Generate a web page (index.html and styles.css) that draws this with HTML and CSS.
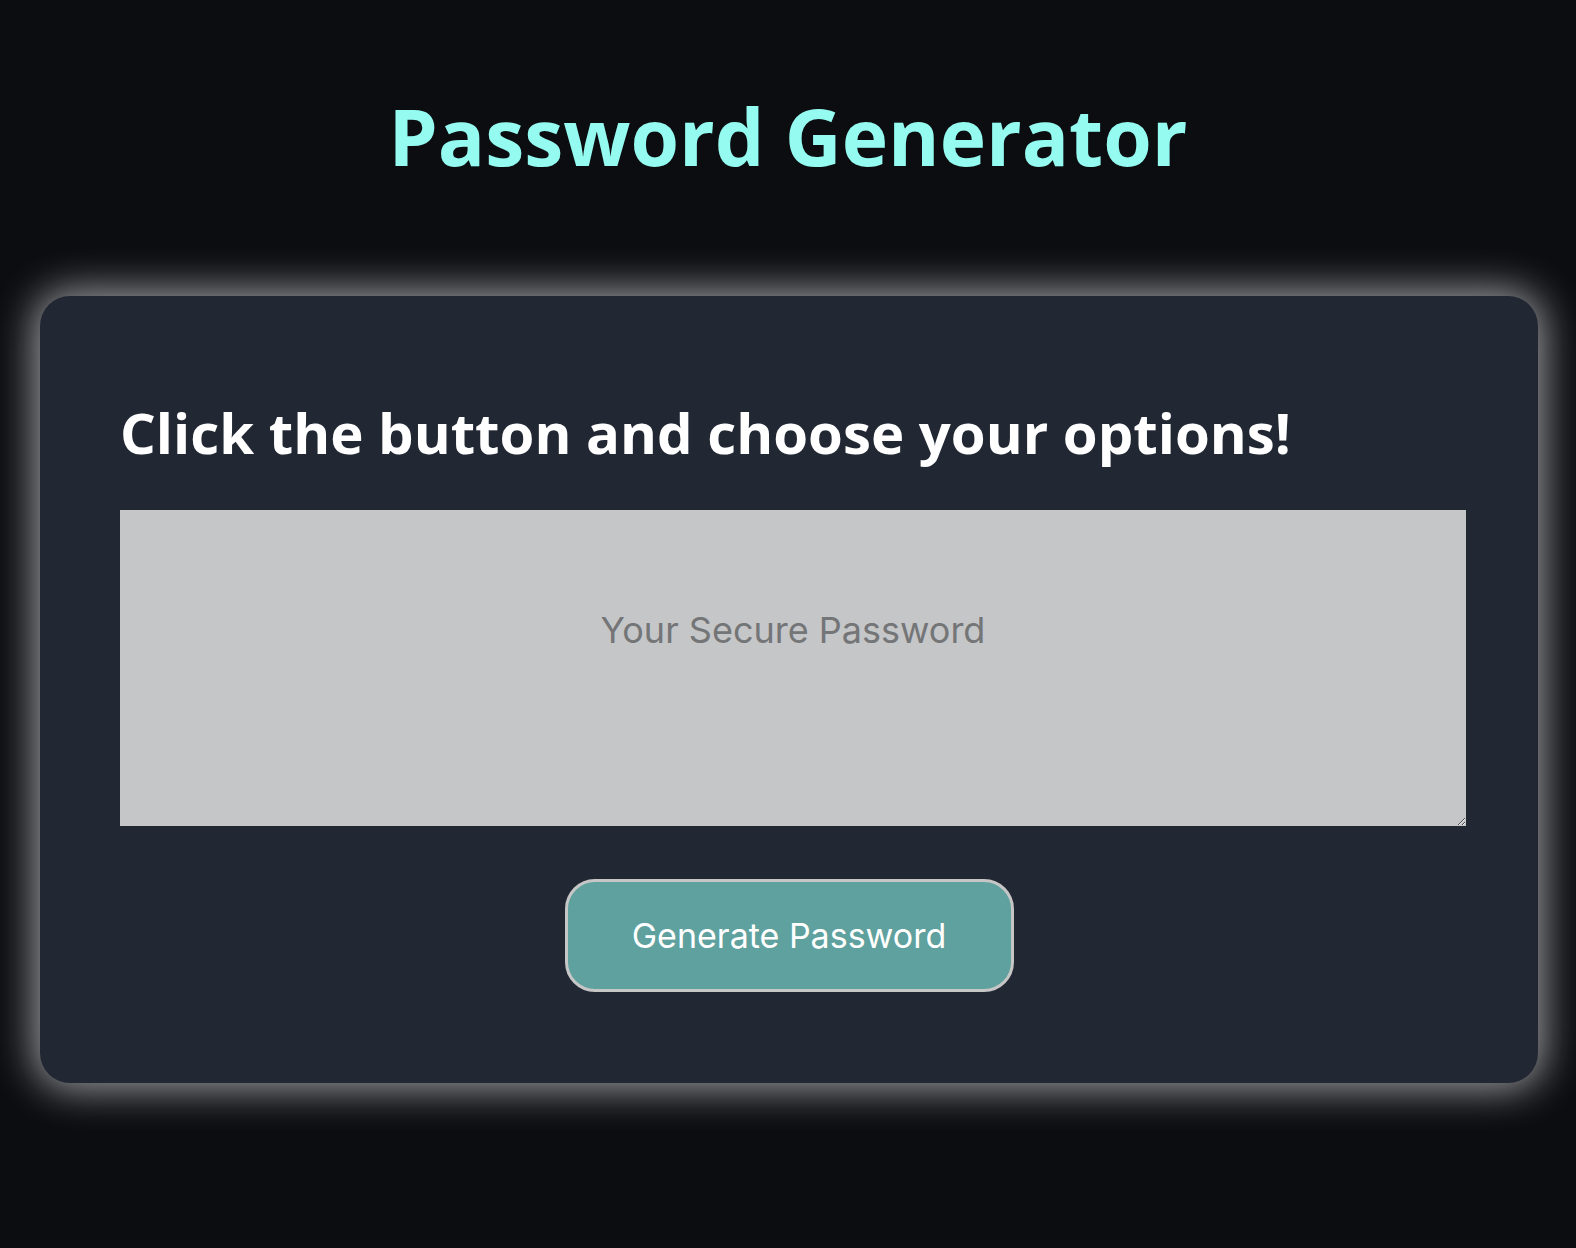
FILE: index.html
```html
<!DOCTYPE html>
<html lang="en">
<head>
<meta charset="UTF-8">
<title>Password Generator</title>
<link rel="stylesheet" href="styles.css">
</head>
<body>
  <div class="wrapper">
    <header class="header">
      <h1 class="title">Password Generator</h1>
    </header>
    <main class="card">
      <h2 class="card-title">Click the button and choose your options!</h2>
      <textarea class="password" readonly placeholder="Your Secure Password" aria-label="Generated Password"></textarea>
      <div class="card-footer">
        <button class="btn" type="button">Generate Password</button>
      </div>
    </main>
  </div>
</body>
</html>
```
FILE: styles.css
```css
html, body {
  margin: 0;
  padding: 0;
  height: 100%;
}

body {
  background: #0b0d11;
  font-family: "Open Sans", "DejaVu Sans", sans-serif;
  overflow: hidden;
}

.wrapper {
  display: flex;
  flex-direction: column;
  padding-top: 89px;
}

.header {
  display: flex;
  justify-content: center;
}

.title {
  margin: 0;
  font-size: 78.5px;
  line-height: 94px;
  font-weight: 700;
  color: #95fbf1;
}

.card {
  margin: 113px 0 0 40px;
  width: 1498px;
  height: 787px;
  box-sizing: border-box;
  padding: 103px 0 0 80px;
  background: #222833;
  border-radius: 30px;
  box-shadow: 0 0 40px 5px rgba(255, 255, 255, 0.62);
  display: flex;
  flex-direction: column;
}

.card-title {
  margin: 0;
  font-size: 56.3px;
  line-height: 67px;
  font-weight: 700;
  color: #ffffff;
}

.password {
  margin-top: 44px;
  width: 1346px;
  height: 316px;
  box-sizing: border-box;
  border: none;
  outline: none;
  background: #c5c6c8;
  padding: 98px 20px 0;
  font-family: "Inter", "Liberation Sans", sans-serif;
  font-size: 36px;
  text-align: center;
  color: #333;
}

.password::placeholder {
  color: #747577;
}

.card-footer {
  display: flex;
  justify-content: center;
  margin-top: 53px;
  padding-right: 80px;
}

.btn {
  width: 449px;
  height: 113px;
  box-sizing: border-box;
  border: 3px solid #c6c6c6;
  border-radius: 30px;
  background: #5fa19e;
  color: #ffffff;
  font-family: "Inter", "Liberation Sans", sans-serif;
  font-size: 34px;
  cursor: pointer;
}
```
